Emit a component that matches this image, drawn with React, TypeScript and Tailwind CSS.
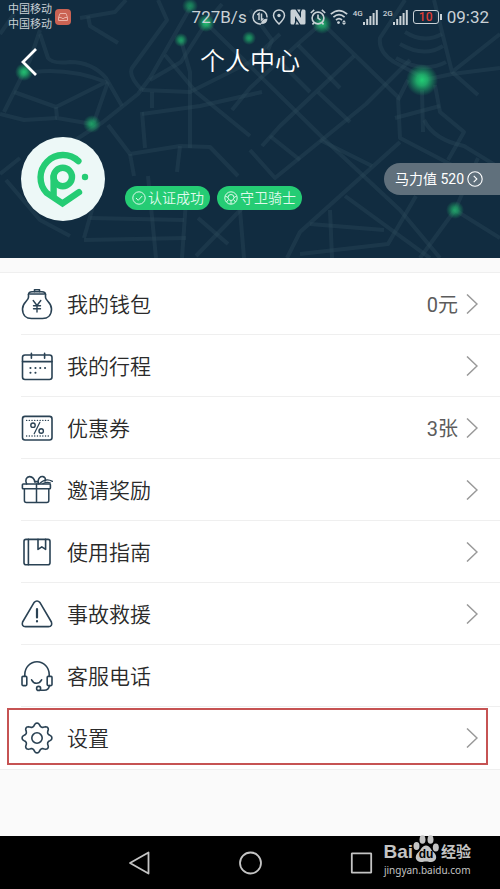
import type { ReactNode } from "react";

const roads = [
  "M190 8 L150 78 L138 94 L103 122 L60 150",
  "M158 0 L167 20 L132 68 Q128 76 142 90",
  "M4 112 L30 60 L40 30",
  "M0 34 L14 14",
  "M40 34 L48 58 Q52 64 70 62 Q92 62 106 78 L122 106",
  "M34 72 Q70 68 106 82 L56 107 L14 92",
  "M56 107 L57 118 L92 124",
  "M0 114 L24 120 L57 118",
  "M108 82 L94 122",
  "M80 18 L115 12 L126 0",
  "M88 16 L90 26 L118 43",
  "M142 90 L190 92 L250 62 L280 34",
  "M142 114 L200 106 L262 92",
  "M150 80 L181 62 L206 23 L222 4",
  "M181 40 L190 72 L190 148",
  "M165 55 L196 92 L250 136",
  "M142 112 L145 148",
  "M152 92 L152 108",
  "M206 23 L250 66 L325 140 L400 210 L440 258",
  "M250 10 L272 40 L268 50",
  "M322 23 L398 97 L400 138 L500 190",
  "M322 23 L300 42 L250 88 L232 110",
  "M298 45 L340 88",
  "M405 0 L380 38 Q378 52 394 62 L424 78",
  "M405 32 Q424 44 442 34",
  "M400 44 Q424 58 443 46",
  "M396 58 Q424 74 446 62",
  "M434 0 L452 72 L500 34",
  "M424 80 L452 74 L500 68",
  "M452 72 L478 95",
  "M410 60 L366 104 L275 178 L250 150",
  "M354 56 L280 126 L262 146",
  "M318 92 L350 122",
  "M280 62 L310 92",
  "M398 100 L408 80",
  "M422 90 L423 132",
  "M435 85 L440 112 L464 132 L448 160",
  "M395 118 L440 106",
  "M424 120 Q434 140 464 146 L500 168",
  "M400 142 L300 232 L287 258",
  "M320 140 L372 166",
  "M345 196 L430 258",
  "M270 136 L300 160",
  "M455 210 L420 258",
  "M478 158 L455 210 L500 238",
  "M416 196 L388 244 L300 254",
  "M330 210 L332 258",
  "M310 224 L384 230",
  "M108 125 L130 154 L180 146 L210 147 L238 176",
  "M130 154 L134 176",
  "M180 146 L177 172",
  "M0 174 L20 158",
  "M6 180 L40 220 L70 236",
  "M96 196 L84 238",
  "M90 218 L184 220",
  "M84 240 L186 238",
  "M148 176 L156 258",
  "M186 200 L182 258",
  "M250 200 L196 256",
  "M198 218 L228 244",
  "M240 210 L244 258",
];

const mapDots = [
  { x: 24, y: 72, r: 9, opacity: 0.9 },
  { x: 92, y: 124, r: 9, opacity: 0.7 },
  { x: 190, y: 6, r: 8, opacity: 0.6 },
  { x: 206, y: 23, r: 9, opacity: 0.9 },
  { x: 181, y: 40, r: 7, opacity: 0.7 },
  { x: 249, y: 38, r: 7, opacity: 0.7 },
  { x: 322, y: 24, r: 10, opacity: 0.8 },
  { x: 422, y: 80, r: 16, opacity: 1 },
  { x: 455, y: 210, r: 9, opacity: 0.7 },
];

// scalloped outline with eight teeth
const gearPath =
  Array.from({ length: 96 }, (_, i) => {
    const a = (i / 96) * Math.PI * 2;
    const wave = Math.cos(8 * a);
    const r = 13.3 + 1.6 * Math.sign(wave) * Math.pow(Math.abs(wave), 0.7);
    return `${i ? "L" : "M"}${(16 + r * Math.sin(a)).toFixed(2)} ${(16 - r * Math.cos(a)).toFixed(2)}`;
  }).join(" ") + " Z";

function MenuIcon({ children }: { children: ReactNode }) {
  return (
    <svg
      viewBox="0 0 32 32"
      className="size-8 shrink-0"
      fill="none"
      stroke="#2a4254"
      strokeWidth="1.6"
      strokeLinecap="round"
      strokeLinejoin="round"
      aria-hidden="true"
    >
      {children}
    </svg>
  );
}

const menu = [
  {
    label: "我的钱包",
    value: "0元",
    arrow: true,
    icon: (
      <MenuIcon>
        <path d="M13.5 3.6V1.8h5v1.8" />
        <path d="M7.5 6.6C7.5 4.6 9 3.8 11 3.8h10c2 0 3.5.8 3.5 2.8M9 6h14" />
        <path d="M7.5 6.6v2.6C7.5 13 1.5 14 1.5 21c0 6.5 4 9.5 9 9.5h11c5 0 9-3 9-9.5 0-7-6-8-6-11.8V6.6" />
        <path d="M12.2 12.5l3.8 5 3.8-5M16 17.5V24M12.5 17.8h7M12.5 20.8h7" strokeWidth="1.4" />
      </MenuIcon>
    ),
  },
  {
    label: "我的行程",
    value: "",
    arrow: true,
    icon: (
      <MenuIcon>
        <rect x="1.5" y="5" width="29.5" height="24.5" rx="2.5" />
        <path d="M1.5 11.6H31M10.4 3.4v4.8M23.6 3.4v4.8" />
        <path d="M9.4 18h.1M14.4 18h.1M19.2 18h.1M24 18h.1M9.4 22.8h.1M14.4 22.8h.1" strokeWidth="2" />
      </MenuIcon>
    ),
  },
  {
    label: "优惠券",
    value: "3张",
    arrow: true,
    icon: (
      <MenuIcon>
        <rect x="1.5" y="4.4" width="29.5" height="23.6" rx="2.5" />
        <path d="M5.6 8.4h22M5.6 24h22" strokeWidth="1.4" strokeDasharray="0.1 2.6" />
        <circle cx="12" cy="13.2" r="2.2" strokeWidth="1.4" />
        <circle cx="20.2" cy="19" r="2.2" strokeWidth="1.4" />
        <path d="M18.8 10.4L13.2 21.8" strokeWidth="1.2" />
      </MenuIcon>
    ),
  },
  {
    label: "邀请奖励",
    value: "",
    arrow: true,
    icon: (
      <MenuIcon>
        <rect x="1.4" y="10" width="28" height="4.8" rx="0.8" />
        <path d="M3.4 14.8v11.8q0 2 2 2h20.4q2 0 2-2V14.8M15.5 10v18.6" strokeWidth="1.5" />
        <path d="M5.6 10C3.6 6 5.6 2.4 8.8 2.6c3 .2 4.6 2.8 5.2 5.4" />
        <path d="M13.6 7.6h3.6v2.4M17 7.4c.6-3 2.4-5.2 5-4.8 2.2.4 3 2.6 2 4.4" />
        <path d="M18.4 9.6c4-3.8 8.6-4.8 13-2.2M22 9.6c2.6-1.4 5.2-1.6 7.4-.6" strokeWidth="1.3" />
      </MenuIcon>
    ),
  },
  {
    label: "使用指南",
    value: "",
    arrow: true,
    icon: (
      <MenuIcon>
        <rect x="3" y="3.4" width="26" height="25.4" rx="2" />
        <path d="M7.4 3.4v25.4M17 3.4v10l3.8-2.6 3.8 2.6v-10" />
      </MenuIcon>
    ),
  },
  {
    label: "事故救援",
    value: "",
    arrow: true,
    icon: (
      <MenuIcon>
        <path d="M13 4.6Q16 1.4 19 4.6L30.4 24q1.4 4.4-3 4.6H4.6Q.2 28.4 1.6 24Z" />
        <path d="M16 11v8.4M16 23.2v.2" strokeWidth="2.2" />
      </MenuIcon>
    ),
  },
  {
    label: "客服电话",
    value: "",
    arrow: false,
    icon: (
      <MenuIcon>
        <path d="M3.8 16.2V14.6a12.2 12.8 0 0 1 24.4 0v1.6" />
        <rect x="1" y="16.4" width="4.8" height="9.2" rx="1" />
        <rect x="26.2" y="16.4" width="4.8" height="9.2" rx="1" />
        <path d="M10.6 19.8c2.4 4.6 7.4 4.6 10 0" />
        <circle cx="17.6" cy="28.4" r="2" />
        <path d="M19.6 30.2h3.4c3 0 5-1.6 5.4-4.6" />
      </MenuIcon>
    ),
  },
  {
    label: "设置",
    value: "",
    arrow: true,
    icon: (
      <MenuIcon>
        <path d={gearPath} />
        <circle cx="16" cy="16" r="5.2" />
      </MenuIcon>
    ),
  },
];

function MapBackground() {
  return (
    <svg
      viewBox="0 0 500 258"
      preserveAspectRatio="xMidYMid slice"
      className="absolute inset-0 size-full"
      aria-hidden="true"
    >
      <defs>
        <radialGradient id="glow">
          <stop offset="0" stopColor="#22cd74" />
          <stop offset="0.35" stopColor="#22c471" stopOpacity="0.8" />
          <stop offset="1" stopColor="#1fae69" stopOpacity="0" />
        </radialGradient>
      </defs>
      <g fill="none" stroke="#2b4757" strokeOpacity="0.42" strokeWidth="4" strokeLinejoin="round">
        {roads.map((d) => (
          <path key={d} d={d} />
        ))}
      </g>
      {mapDots.map((dot) => (
        <circle key={dot.x} cx={dot.x} cy={dot.y} r={dot.r} opacity={dot.opacity} fill="url(#glow)" />
      ))}
    </svg>
  );
}

function Signal({ label }: { label: string }) {
  return (
    <span className="flex items-start">
      <span className="text-[8px] leading-[9px] font-medium">{label}</span>
      <svg viewBox="0 0 15 16" className="h-4 w-[15px]" fill="currentColor" aria-hidden="true">
        <path d="M0 13h2v3H0zM3.2 10h2v6h-2zM6.4 7h2v9h-2zM9.6 4h2v12h-2zM12.8 1h2v15h-2z" />
      </svg>
    </span>
  );
}

function StatusBar() {
  return (
    <div className="flex h-[34px] items-center justify-between pr-[11px] pl-2 text-[#c9d1d6]">
      <div className="flex items-center gap-[3px]">
        <div className="text-[11px] leading-[15px]">
          <p>中国移动</p>
          <p>中国移动</p>
        </div>
        <svg viewBox="0 0 16 16" className="size-4" fill="none" stroke="#e9b1a6" aria-hidden="true">
          <rect width="16" height="16" rx="4" fill="#cb6353" stroke="none" />
          <path d="M3.5 8.5L5 4.5h6l1.5 4v3h-9zM3.5 8.5H6q2 2.5 4 0h2.5" />
        </svg>
      </div>
      <div className="flex items-center gap-[5px]">
        <span className="text-[17px] leading-5">727B/s</span>
        <span className="flex items-center gap-1">
          <svg viewBox="0 0 16 16" className="size-4" fill="none" stroke="currentColor" strokeWidth="1.5" aria-hidden="true">
            <path d="M9 14.9A7 7 0 1 1 15 8.5" />
            <path d="M5.2 5.8L7 4.5V11M9.5 4.5V11l2-1.5" />
            <path d="M9 15q0-5 6.5-5.5Q15.5 15 9 15z" fill="currentColor" stroke="none" />
          </svg>
          <svg viewBox="0 0 14 16" className="h-4 w-3.5" fill="none" stroke="currentColor" strokeWidth="1.5" aria-hidden="true">
            <path d="M7 15Q1.5 9.5 1.5 6.4a5.5 5.4 0 0 1 11 0Q12.5 9.5 7 15z" />
            <circle cx="7" cy="6.5" r="1.7" fill="currentColor" stroke="none" />
          </svg>
          <svg viewBox="0 0 16 16" className="size-4" fill="currentColor" aria-hidden="true">
            <path d="M2 .5h3.500l5.500 8.500V3l1-2.500h2q1.500 0 1.500 1.500v12q0 1.500-1.500 1.500h-3.500L5 7v6l-1 2.500H2Q.5 15.500.5 14V2Q.5.5 2 .5z" />
            <path d="M7 .5h3.500L9.500 3v1.200zM9 15.500H5.500l1-2.500v-1.200z" />
          </svg>
          <svg viewBox="0 0 16 16" className="size-4" fill="none" stroke="currentColor" strokeWidth="1.6" aria-hidden="true">
            <circle cx="8" cy="9" r="5.9" />
            <path d="M8 5.5V9l2.5 2M.8 4L4.2.9M15.2 4L11.8.9M4 13.5l-1.5 2M12 13.5l1.5 2" />
          </svg>
          <svg viewBox="0 0 18 16" className="h-4 w-[18px]" fill="none" stroke="currentColor" strokeWidth="1.7" aria-hidden="true">
            <path d="M.8 5.2Q9-2 17.2 5.2M3.4 8.2Q9 3 14.6 8.2M6 11q3-2.6 6 0" />
            <circle cx="8.5" cy="13.6" r="1.4" fill="currentColor" stroke="none" />
            <path d="M14 11l-2 2.5h4zM14 16l-2-2h4z" fill="currentColor" stroke="none" />
          </svg>
        </span>
        <Signal label="4G" />
        <Signal label="2G" />
        <span className="flex items-center gap-px">
          <span className="flex h-3.5 w-[26px] items-center justify-center rounded-[3px] border border-[#c9d1d6] text-[12px] font-medium text-[#df3d33]">
            10
          </span>
          <span className="h-1.5 w-0.5 bg-[#c9d1d6]" />
        </span>
        <span className="text-[17px] leading-5">09:32</span>
      </div>
    </div>
  );
}

function Header() {
  return (
    <header className="relative h-[258px] overflow-hidden bg-[#112c40]">
      <MapBackground />
      <div className="relative">
        <StatusBar />
        <div className="grid h-14 grid-cols-[1fr_auto_1fr] items-center px-5 text-white">
          <button type="button" aria-label="返回" className="w-8">
            <svg viewBox="0 0 18 28" className="h-7 w-[18px]" fill="none" stroke="currentColor" strokeWidth="2.8" aria-hidden="true">
              <path d="M16 1L3 14l13 13" />
            </svg>
          </button>
          <h1 className="text-[25px] leading-8 [font-weight:350]">个人中心</h1>
        </div>
        <div className="flex items-start pt-[47px] pl-[21px]">
          <div className="flex size-[84px] shrink-0 items-center justify-center rounded-full bg-[#edf8f7]">
            <svg viewBox="0 0 84 84" className="size-full" fill="none" stroke="#25cc74" strokeWidth="6.4" strokeLinecap="round" role="img" aria-label="头像">
              <path d="M57.4 24.1A22.5 22.5 0 0 0 25.6 55.9L41.5 66.4 58 55.2" strokeLinejoin="miter" />
              <circle cx="41.8" cy="40" r="9.2" />
              <path d="M32.6 40V59" />
              <circle cx="64" cy="40" r="3.2" fill="#25cc74" stroke="none" />
            </svg>
          </div>
          <div className="flex gap-[7px] pt-[49px] pl-5">
            <span className="flex h-6 items-center gap-0.5 rounded-full bg-[#25cc74] pr-1.5 pl-[7px] text-[14px] leading-5 text-[#dff9eb] [font-weight:350]">
              <svg viewBox="0 0 14 14" className="size-3.5" fill="none" stroke="currentColor" aria-hidden="true">
                <circle cx="7" cy="7" r="6.2" />
                <path d="M4 7l2.2 2.3L10.2 5" />
              </svg>
              认证成功
            </span>
            <span className="flex h-6 items-center gap-0.5 rounded-full bg-[#25cc74] pr-1.5 pl-[7px] text-[14px] leading-5 text-[#dff9eb] [font-weight:350]">
              <svg viewBox="0 0 14 14" className="size-3.5" fill="none" stroke="currentColor" aria-hidden="true">
                <circle cx="7" cy="7" r="6.2" />
                <circle cx="7" cy="6.5" r="3" />
                <path d="M7 9.5V13M4 6.5L1.2 5M10 6.5L12.8 5M4 9l-1.5 2M10 9l1.5 2" />
              </svg>
              守卫骑士
            </span>
          </div>
          <a
            href="#score"
            className="mt-[26px] ml-auto flex h-8 items-center gap-[3px] rounded-l-full bg-[#60707c] pr-[17px] pl-[11px] text-[14px] whitespace-nowrap text-white"
          >
            马力值 520
            <svg viewBox="0 0 16 16" className="size-4" fill="none" stroke="currentColor" strokeWidth="1.1" aria-hidden="true">
              <circle cx="8" cy="8" r="7.2" />
              <path d="M6.7 4.8L9.9 8l-3.2 3.2" />
            </svg>
          </a>
        </div>
      </div>
    </header>
  );
}

function Watermark() {
  return (
    <div className="absolute -top-0.5 right-[29px] flex flex-col items-center text-[#c4c4c4]">
      <div className="flex h-[28px] items-end">
        <span className="font-['Liberation_Sans'] text-[19px] leading-5 font-bold">Bai</span>
        <span className="relative h-[27px] w-[26px]">
          <svg viewBox="0 0 26 27" className="size-full" fill="currentColor" aria-hidden="true">
            <ellipse cx="3.5" cy="11" rx="3" ry="4" />
            <ellipse cx="9.5" cy="4.5" rx="3" ry="4.3" />
            <ellipse cx="17.5" cy="4.5" rx="3" ry="4.3" />
            <ellipse cx="22.8" cy="12.5" rx="3" ry="4" />
            <path d="M13 10.5c4 0 4.5 4 7.5 6.5 5 4.5 2.5 10-2.5 10-2 0-3-.6-5-.6s-3 .6-5 .6c-5 0-7.5-5.5-2.5-10C8.5 14.5 9 10.5 13 10.5z" />
          </svg>
          <span className="absolute inset-x-0 bottom-0.5 text-center font-['Liberation_Sans'] text-[12px] leading-3 font-bold text-black">
            du
          </span>
        </span>
        <span className="pl-0.5 text-[15px] leading-5 font-bold">经验</span>
      </div>
      <span className="font-['Noto_Sans'] text-[10px] leading-4">jingyan.baidu.com</span>
    </div>
  );
}

export default function App() {
  return (
    <div className="flex min-h-screen flex-col bg-[#fafafa] font-[Roboto,'Noto_Sans_CJK_SC',sans-serif]">
      <Header />
      <main className="flex-1 pt-3.5">
        <ul className="border-y border-[#efefef] bg-white">
          {menu.map((item, i) => (
            <li key={item.label} className="relative pl-[21px]">
              <a
                href={`#item-${i}`}
                className={`flex h-[62px] items-center pr-[22px] ${i < menu.length - 1 ? "border-b border-[#efefef]" : ""}`}
              >
                {item.icon}
                <span className="pt-1 pl-3.5 text-[21px] text-[#2a2a2a] [font-weight:350]">{item.label}</span>
                <span className="ml-auto pt-0.5 pr-2 text-[20px] text-[#5c5c5c]">{item.value}</span>
                {item.arrow && (
                  <svg viewBox="0 0 12 20" className="h-5 w-3" fill="none" stroke="#999" strokeWidth="1.5" aria-hidden="true">
                    <path d="M1 .5L11 10 1 19.5" />
                  </svg>
                )}
              </a>
              {item.label === "设置" && (
                <span className="pointer-events-none absolute top-px right-3 bottom-1 left-[7px] border-2 border-[#c65353]" />
              )}
            </li>
          ))}
        </ul>
      </main>
      <nav className="relative flex h-[53px] items-center justify-center gap-[88px] bg-black text-[#c4c4c4]">
        <button type="button" aria-label="后退">
          <svg viewBox="0 0 23 24" className="h-6 w-[23px]" fill="none" stroke="currentColor" strokeWidth="1.8" strokeLinejoin="round" aria-hidden="true">
            <path d="M20.5 1.5v21L2 12z" />
          </svg>
        </button>
        <button type="button" aria-label="主页">
          <svg viewBox="0 0 23 24" className="h-6 w-[23px]" fill="none" stroke="currentColor" strokeWidth="1.8" aria-hidden="true">
            <circle cx="11.5" cy="12" r="10.5" />
          </svg>
        </button>
        <button type="button" aria-label="最近任务">
          <svg viewBox="0 0 23 24" className="h-6 w-[23px]" fill="none" stroke="currentColor" strokeWidth="1.8" aria-hidden="true">
            <rect x="1.8" y="2.3" width="19.4" height="19.4" rx="0.5" />
          </svg>
        </button>
        <Watermark />
      </nav>
    </div>
  );
}
